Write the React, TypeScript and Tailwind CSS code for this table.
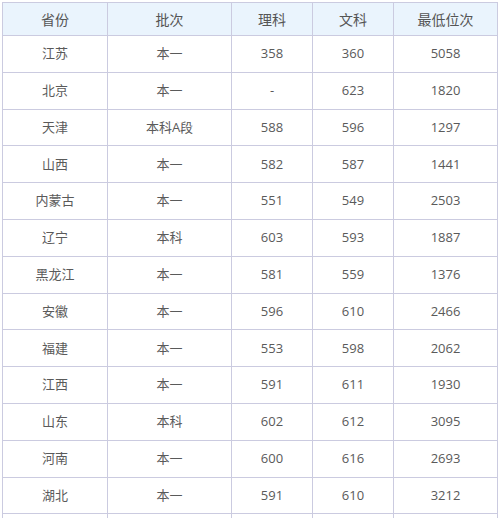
import React from "react";

const rows: [string, string, string, string, string][] = [
  ["江苏", "本一", "358", "360", "5058"],
  ["北京", "本一", "-", "623", "1820"],
  ["天津", "本科A段", "588", "596", "1297"],
  ["山西", "本一", "582", "587", "1441"],
  ["内蒙古", "本一", "551", "549", "2503"],
  ["辽宁", "本科", "603", "593", "1887"],
  ["黑龙江", "本一", "581", "559", "1376"],
  ["安徽", "本一", "596", "610", "2466"],
  ["福建", "本一", "553", "598", "2062"],
  ["江西", "本一", "591", "611", "1930"],
  ["山东", "本科", "602", "612", "3095"],
  ["河南", "本一", "600", "616", "2693"],
  ["湖北", "本一", "591", "610", "3212"],
  ["", "", "", "", ""],
];

const headers = ["省份", "批次", "理科", "文科", "最低位次"];

export default function App() {
  return (
    <div className="w-[500px] h-[518px] overflow-hidden bg-white pl-[2px] pt-[2px]">
      <table
        className="table-fixed border-collapse text-[13px] text-[#5a5a5a] text-center"
        style={{ fontFamily: '"Open Sans", "Noto Sans CJK SC", sans-serif' }}
      >
        <colgroup>
          <col className="w-[105px]" />
          <col className="w-[124px]" />
          <col className="w-[81px]" />
          <col className="w-[81px]" />
          <col className="w-[104px]" />
        </colgroup>
        <thead>
          <tr className="h-[33px] bg-[#eaf4fd]">
            {headers.map((h) => (
              <th
                key={h}
                className="border border-[#cbcbe0] font-normal text-[14px] text-[#555] p-0"
              >
                {h}
              </th>
            ))}
          </tr>
        </thead>
        <tbody>
          {rows.map((r, i) => (
            <tr key={i} className="h-[36.8px]">
              {r.map((c, j) => (
                <td key={j} className="border border-[#cbcbe0] p-0">
                  {c}
                </td>
              ))}
            </tr>
          ))}
        </tbody>
      </table>
    </div>
  );
}
